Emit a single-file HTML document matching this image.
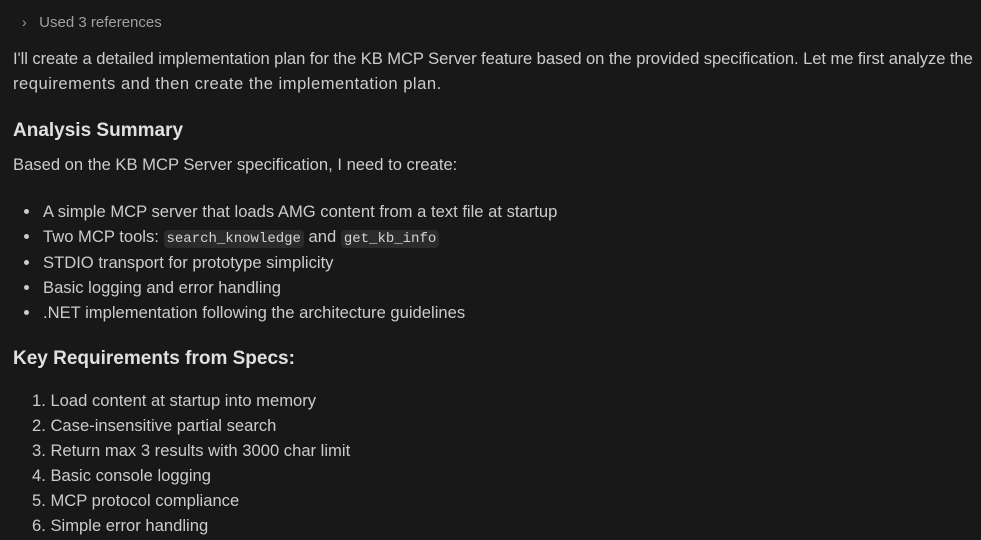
<!DOCTYPE html>
<html><head><style>
html,body{margin:0;background:#181818;width:981px;height:540px;overflow:hidden}
body{font-family:"Liberation Sans",sans-serif;color:#cccccc;font-size:16.6px;position:relative}
.l{position:absolute;white-space:nowrap;line-height:20px}
.h{font-weight:bold;font-size:19px;color:#e0e0e0}
code{font-family:"Liberation Mono",monospace;font-size:14px;background:#2b2b2b;border-radius:4px;padding:1px 3px;color:#d4d4d4}
.dot{position:absolute;width:5px;height:5px;border-radius:50%;background:#cccccc}
</style></head><body>
<div class="l" style="left:22px;top:12px;color:#a0a0a0;font-size:15px"><span style="font-size:14px">&#x203A;</span>&nbsp;&nbsp; Used 3 references</div>
<div class="l" style="left:13px;top:49px;letter-spacing:-0.08px">I'll create a detailed implementation plan for the KB MCP Server feature based on the provided specification. Let me first analyze the</div>
<div class="l" style="left:13px;top:74px;letter-spacing:0.5px">requirements and then create the implementation plan.</div>
<div class="l h" style="left:13px;top:121px">Analysis Summary</div>
<div class="l" style="left:13px;top:155px">Based on the KB MCP Server specification, I need to create:</div>
<div class="dot" style="left:24px;top:209px"></div><div class="l" style="left:43px;top:202px">A simple MCP server that loads AMG content from a text file at startup</div>
<div class="dot" style="left:24px;top:234px"></div><div class="l" style="left:43px;top:227px">Two MCP tools: <code>search_knowledge</code> and <code>get_kb_info</code></div>
<div class="dot" style="left:24px;top:260px"></div><div class="l" style="left:43px;top:253px">STDIO transport for prototype simplicity</div>
<div class="dot" style="left:24px;top:285px"></div><div class="l" style="left:43px;top:278px">Basic logging and error handling</div>
<div class="dot" style="left:24px;top:310px"></div><div class="l" style="left:43px;top:303px">.NET implementation following the architecture guidelines</div>
<div class="l h" style="left:13px;top:349px">Key Requirements from Specs:</div>
<div class="l" style="left:32px;top:391px">1. Load content at startup into memory</div>
<div class="l" style="left:32px;top:416px">2. Case-insensitive partial search</div>
<div class="l" style="left:32px;top:441px">3. Return max 3 results with 3000 char limit</div>
<div class="l" style="left:32px;top:466px">4. Basic console logging</div>
<div class="l" style="left:32px;top:491px">5. MCP protocol compliance</div>
<div class="l" style="left:32px;top:516px">6. Simple error handling</div>
</body></html>
